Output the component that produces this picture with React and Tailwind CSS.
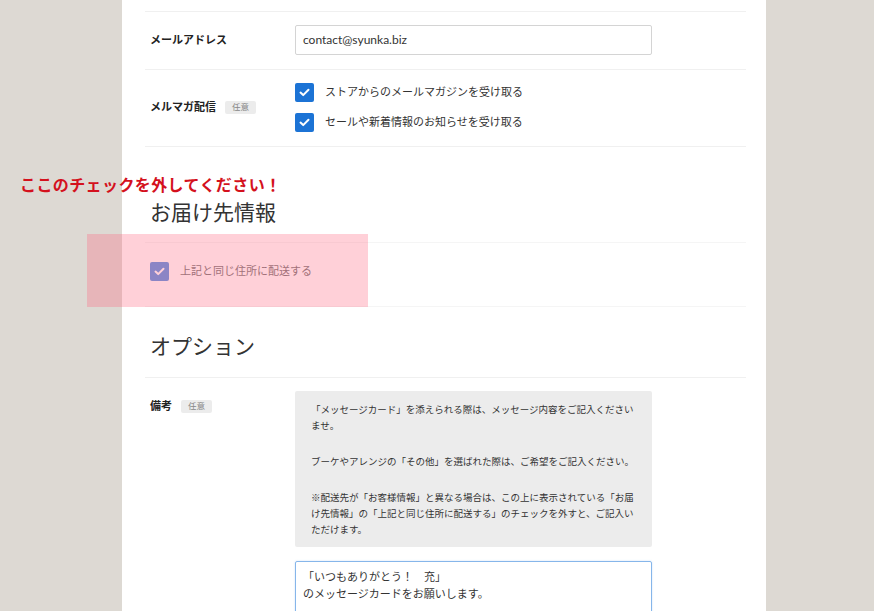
import React from "react";

function CheckBox({ className }) {
  return (
    <span
      className={
        "flex h-[19px] w-[19px] shrink-0 items-center justify-center rounded-[2px] " +
        className
      }
    >
      <svg width="11" height="9" viewBox="0 0 11 9">
        <path
          d="M1.5 4.6 L4.2 7.1 L9.5 1.8"
          fill="none"
          stroke="white"
          strokeWidth="2"
          strokeLinecap="round"
          strokeLinejoin="round"
        />
      </svg>
    </span>
  );
}

function Badge() {
  return (
    <span className="ml-[9px] rounded-[2px] bg-[#ececec] px-[7px] text-[8.5px] font-normal leading-[13px] text-[#888]">
      任意
    </span>
  );
}

export default function App() {
  return (
    <div
      className="relative flex h-[611px] w-full overflow-hidden bg-[#ddd9d3] text-[#333]"
      style={{ fontFamily: 'Lato, "Noto Sans CJK JP", sans-serif' }}
    >
      <div className="ml-[122px] w-[644px] bg-white pl-[23px] pr-[20px] pt-[11px]">
        {/* email row */}
        <div className="grid grid-cols-[145px_1fr] items-center border-t border-[#f0f0f0] pb-[14px] pl-[5px] pt-[13px]">
          <div className="text-[11px] font-bold text-[#222]">メールアドレス</div>
          <div className="flex h-[30px] w-[357px] items-center rounded-[2px] border border-[#d4d4d4] px-[7px] text-[12px] text-[#333]">
            contact@syunka.biz
          </div>
        </div>
        {/* magazine row */}
        <div className="grid grid-cols-[145px_1fr] items-center border-t border-[#f0f0f0] pb-[14px] pl-[5px] pt-[13px]">
          <div className="flex items-center text-[11px] font-bold text-[#222]">
            メルマガ配信
            <Badge />
          </div>
          <div className="flex flex-col gap-[11px]">
            <div className="flex items-center gap-[11px] text-[11px] text-[#333]">
              <CheckBox className="bg-[#1c73d5]" />
              ストアからのメールマガジンを受け取る
            </div>
            <div className="flex items-center gap-[11px] text-[11px] text-[#333]">
              <CheckBox className="bg-[#1c73d5]" />
              セールや新着情報のお知らせを受け取る
            </div>
          </div>
        </div>
        {/* delivery heading */}
        <div className="border-t border-[#f0f0f0] pb-[15px] pl-[5px] pt-[50px]">
          <h2 className="text-[21px] font-normal leading-[30px] text-[#333]">
            お届け先情報
          </h2>
        </div>
        <div className="border-y border-[#f5f5f5] pb-[25px] pl-[5px] pt-[19px]">
          <div className="flex items-center gap-[11px] text-[11px] text-[#777]">
            <CheckBox className="bg-[#5a94e4]" />
            上記と同じ住所に配送する
          </div>
        </div>
        {/* option heading */}
        <div className="pb-[16px] pl-[5px] pt-[24px]">
          <h2 className="text-[21px] font-normal leading-[30px] text-[#333]">
            オプション
          </h2>
        </div>
        <div className="grid grid-cols-[145px_1fr] items-start border-t border-[#f0f0f0] pl-[5px] pt-[13px]">
          <div className="flex items-center pt-[7px] text-[11px] font-bold text-[#222]">
            備考
            <Badge />
          </div>
          <div className="flex w-[357px] flex-col gap-[14px]">
            <div className="whitespace-nowrap rounded-[2px] bg-[#ececec] px-[16px] pb-[9px] pt-[11px] text-[9.5px] leading-[16px] text-[#333]">
              <p className="mb-[20px]">
                「メッセージカード」を添えられる際は、メッセージ内容をご記入ください
                <br />
                ませ。
              </p>
              <p className="mb-[20px]">
                ブーケやアレンジの「その他」を選ばれた際は、ご希望をご記入ください。
              </p>
              <p>
                ※配送先が「お客様情報」と異なる場合は、この上に表示されている「お届
                <br />
                け先情報」の「上記と同じ住所に配送する」のチェックを外すと、ご記入い
                <br />
                ただけます。
              </p>
            </div>
            <div className="h-[80px] rounded-[2px] border border-[#86b6ea] px-[7px] pt-[6px] text-[11px] leading-[17px] text-[#333] shadow-[0_0_2px_rgba(100,160,230,0.35)]">
              「いつもありがとう！　充」
              <br />
              のメッセージカードをお願いします。
            </div>
          </div>
        </div>
      </div>

      {/* annotations */}
      <div className="absolute left-[20px] top-[174px] whitespace-nowrap text-[16px] font-bold leading-[22px] tracking-[0.4px] text-[#d4111d]">
        ここのチェックを外してください！
      </div>
      <div className="absolute left-[87px] top-[234px] h-[73px] w-[281px] bg-[rgba(255,98,125,0.3)]" />
    </div>
  );
}
